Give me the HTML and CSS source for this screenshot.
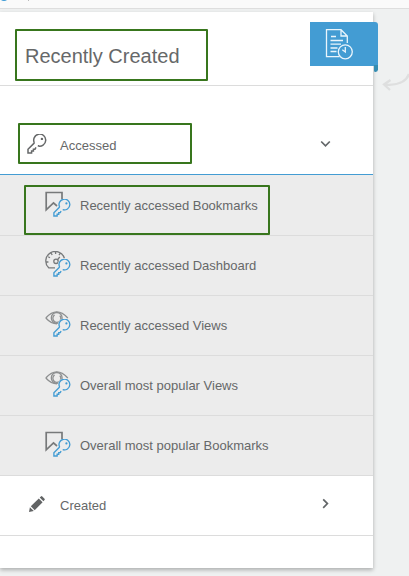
FILE: index.html
```html
<!DOCTYPE html>
<html lang="en">
<head>
<meta charset="utf-8">
<title>Recently Created</title>
<link rel="stylesheet" href="styles.css">
</head>
<body>
<svg class="defs" aria-hidden="true">
  <symbol id="key" viewBox="0 0 20 20">
    <path d="M7.4 8.9A6 6 0 1 1 10.8 11.8M7.4 8.9L1 15.3V18.9H4.6V16.9H6.4V15.2H8L9 13.4M10.8 11.8L12.6 12.3"/>
    <circle class="hole" cx="14.9" cy="4.9" r="1.2"/>
  </symbol>
  <symbol id="halo" viewBox="0 0 20 20">
    <circle cx="13" cy="6.6" r="7.6"/>
    <path d="M8 8L0 15V20H6L13 13Z"/>
  </symbol>
  <symbol id="bookmark" viewBox="0 0 26 26">
    <path class="shape" d="M17 10V1.5H1.2V18.8L8.5 11.8L12 15"/>
  </symbol>
  <symbol id="gauge" viewBox="0 0 26 26">
    <path class="thin" d="M10 16.8H3.7A9.5 9.5 0 1 1 19.4 7.2M3.2 5.8L5 6.8M6.2 2.2L7.2 4M10.6.8V3M15.2 2.4L14 4.2M12.3 9L14.8 5.8M1.2 11H3.4"/>
    <circle class="thin" cx="11" cy="10.3" r="2.2"/>
  </symbol>
  <symbol id="eye" viewBox="0 0 26 26">
    <path class="thin eye" d="M.8 7Q11.8-5.4 22.8 7M.8 7Q6 12.7 12 12.8"/>
    <circle class="thin eye" cx="11.7" cy="6.9" r="5.4"/>
    <path class="thin eye" d="M14.8 4.6A4 4 0 1 1 9.6 4"/>
  </symbol>
</svg>

<header class="topbar"><span class="dot"></span><span class="tick"></span></header>

<main class="panel">
  <section class="head">
    <h1 class="title">Recently Created</h1>
    <div class="ribbon">
      <svg width="30" height="32" viewBox="0 0 30 32">
        <path d="M14.5 28.7H1.5V1.7H16L22.3 8V15M16 1.7V8H22.3M6 8.5H11M5.5 12.5H18M5.5 16.2H16M5.5 20H12.5M5.5 23.5H11.5"/>
        <circle cx="20.3" cy="23.8" r="7"/>
        <path d="M20.3 19V24L17.3 21.8"/>
      </svg>
    </div>
  </section>

  <section class="group open">
    <div class="label boxed"><svg class="key-icon"><use href="#key"/></svg><span>Accessed</span></div>
    <svg class="chevron down" viewBox="0 0 12 12"><path d="M2.2 3.5L6.5 7.8L10.8 3.5"/></svg>
  </section>

  <ul class="list">
    <li><div class="item boxed"><span class="combo"><svg class="base"><use href="#bookmark"/></svg><svg class="mini"><use class="halo" href="#halo"/><use href="#key"/></svg></span>Recently accessed Bookmarks</div></li>
    <li><div class="item"><span class="combo"><svg class="base"><use href="#gauge"/></svg><svg class="mini"><use class="halo" href="#halo"/><use href="#key"/></svg></span>Recently accessed Dashboard</div></li>
    <li><div class="item"><span class="combo"><svg class="base"><use href="#eye"/></svg><svg class="mini"><use class="halo" href="#halo"/><use href="#key"/></svg></span>Recently accessed Views</div></li>
    <li><div class="item"><span class="combo"><svg class="base"><use href="#eye"/></svg><svg class="mini"><use class="halo" href="#halo"/><use href="#key"/></svg></span>Overall most popular Views</div></li>
    <li><div class="item"><span class="combo"><svg class="base"><use href="#bookmark"/></svg><svg class="mini"><use class="halo" href="#halo"/><use href="#key"/></svg></span>Overall most popular Bookmarks</div></li>
  </ul>

  <section class="group closed">
    <div class="label"><svg class="pencil" viewBox="0 0 16 16"><path d="M0 16L.9 11.2L4.8 15.1ZM1.8 10.2L9.8 2.4L13.6 6.2L5.7 14.2ZM10.7 1.6L11.9.4Q12.6-.2 13.3.5L15.5 2.7Q16.1 3.4 15.5 4.1L14.4 5.3Z"/></svg><span>Created</span></div>
    <svg class="chevron right" viewBox="0 0 12 12"><path d="M4.2 1.4L8.4 5.6L4.2 9.8"/></svg>
  </section>
</main>

<svg class="arrow" viewBox="0 0 30 24"><path d="M28 1C25 9 16 13 3 11.5M9.5 7L3 11.5L9 17"/></svg>
</body>
</html>
```

FILE: styles.css
```css
* { box-sizing: border-box; }

body {
  margin: 0;
  height: 576px;
  overflow: hidden;
  background: #eff1f1;
  color: #666869;
  font: 13px/16px "Liberation Sans", Arial, sans-serif;
}

svg { display: block; flex: none; fill: none; stroke: currentColor; }
.defs { position: absolute; width: 0; height: 0; }

.topbar {
  display: flex;
  height: 9px;
  margin-bottom: 3px;
  background: #fafafa;
  border-bottom: 1px solid #dedede;
  overflow: hidden;
}
.dot { width: 10px; height: 10px; margin: -9px 0 0 -1px; border-radius: 50%; background: #3d9bd6; }
.tick { width: 1px; height: 1px; margin-left: 19px; background: #bbb; }

.panel {
  width: 373px;
  height: 556px;
  background: #fff;
  box-shadow: 0 2px 4px rgba(0, 0, 0, .28);
}

.head {
  display: flex;
  justify-content: space-between;
  height: 74px;
  border-bottom: 1px solid #dcdcdc;
}
.title {
  width: 193px;
  height: 52px;
  margin: 17px 0 0 15px;
  padding-left: 8px;
  border: 2px solid #38761d;
  border-radius: 1px;
  font-size: 20px;
  font-weight: normal;
  line-height: 50px;
}
.ribbon {
  position: relative;
  width: 68px;
  height: 44px;
  margin: 10px -5px 0 0;
  padding: 6px 0 0 15px;
  background: #439cd3;
  border-radius: 0 3px 0 0;
  color: #eaf5fc;
}
.ribbon svg { stroke-width: 1.3; }
.ribbon::after {
  content: "";
  position: absolute;
  top: 43px;
  right: 0;
  width: 4px;
  height: 7px;
  background: #358db2;
  border-radius: 0 0 3px 2px;
}

.group { display: flex; justify-content: space-between; }
.open { height: 89px; padding: 37px 42px 0 18px; border-bottom: 1px solid #439cd3; }
.label { display: flex; align-items: center; }
.boxed { border: 2px solid #38761d; border-radius: 1px; }
.open .label { width: 174px; height: 41px; padding: 4px 0 0 7px; }
.open .label span { margin-left: 13px; }
.key-icon { width: 20px; height: 20px; margin-top: -4px; stroke-width: 1.5; }
.hole { fill: currentColor; stroke: none; }
.chevron { width: 12px; height: 12px; stroke: #626668; stroke-width: 1.7; }
.down { margin-top: 15px; }

.list { margin: 0; padding: 0; list-style: none; background: #ececec; }
.list li { height: 60px; padding: 10px 0 0 24px; border-bottom: 1px solid #dcdcdc; }
.list li:first-child { height: 61px; }
.item { display: flex; height: 50px; padding: 5px 0 0 21px; line-height: 30px; }
.item.boxed { width: 246px; padding: 4px 0 0 19px; }
.combo { position: relative; flex: none; width: 26px; height: 26px; margin-right: 9px; }
.base { width: 26px; height: 26px; }
.mini { position: absolute; left: 8px; top: 8px; width: 18px; height: 18px; color: #439cd3; stroke-width: 1.5; }
.halo { fill: #ececec; stroke: none; }
.shape { stroke: #77797a; stroke-width: 1.7; }
.thin { stroke: #77797a; stroke-width: 1.3; }
.eye { stroke: #8d8f90; }

.closed { height: 60px; padding: 0 42px 0 29px; border-bottom: 1px solid #dcdcdc; }
.closed .label { height: 59px; }
.closed .label span { margin-left: 15px; }
.pencil { width: 16px; height: 16px; margin-top: -4px; fill: #626465; stroke: none; }
.right { margin-top: 22px; }

.arrow {
  position: absolute;
  left: 381px;
  top: 73px;
  width: 30px;
  height: 24px;
  stroke: #dedfdf;
  stroke-width: 2.3;
}
```
